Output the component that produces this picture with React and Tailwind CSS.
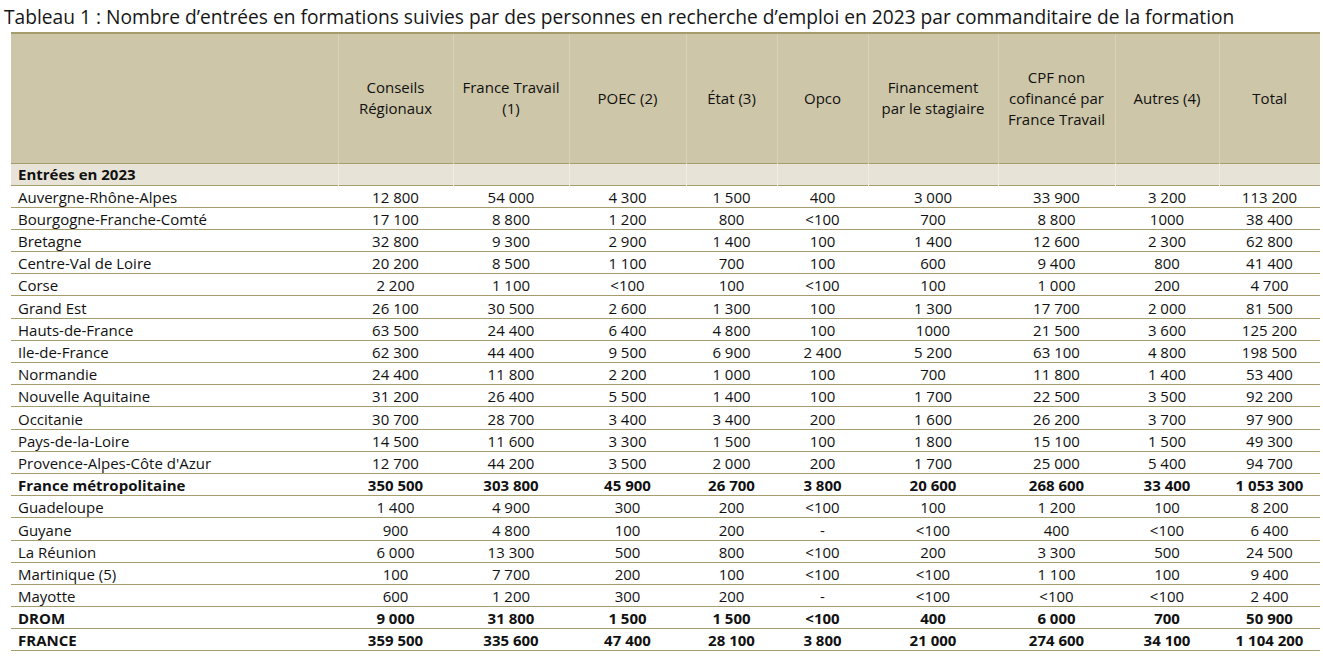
import React from "react";

const cols = [
  { label: ["Conseils", "Régionaux"], w: "w-[115px]" },
  { label: ["France Travail", "(1)"], w: "w-[116px]" },
  { label: ["POEC (2)"], w: "w-[117px]" },
  { label: ["État (3)"], w: "w-[91px]" },
  { label: ["Opco"], w: "w-[91px]" },
  { label: ["Financement", "par le stagiaire"], w: "w-[130px]" },
  { label: ["CPF non", "cofinancé par", "France Travail"], w: "w-[117px]" },
  { label: ["Autres (4)"], w: "w-[104px]" },
  { label: ["Total"], w: "w-[101px]" },
];

const rows = [
  ["Auvergne-Rhône-Alpes", "12 800", "54 000", "4 300", "1 500", "400", "3 000", "33 900", "3 200", "113 200"],
  ["Bourgogne-Franche-Comté", "17 100", "8 800", "1 200", "800", "<100", "700", "8 800", "1000", "38 400"],
  ["Bretagne", "32 800", "9 300", "2 900", "1 400", "100", "1 400", "12 600", "2 300", "62 800"],
  ["Centre-Val de Loire", "20 200", "8 500", "1 100", "700", "100", "600", "9 400", "800", "41 400"],
  ["Corse", "2 200", "1 100", "<100", "100", "<100", "100", "1 000", "200", "4 700"],
  ["Grand Est", "26 100", "30 500", "2 600", "1 300", "100", "1 300", "17 700", "2 000", "81 500"],
  ["Hauts-de-France", "63 500", "24 400", "6 400", "4 800", "100", "1000", "21 500", "3 600", "125 200"],
  ["Ile-de-France", "62 300", "44 400", "9 500", "6 900", "2 400", "5 200", "63 100", "4 800", "198 500"],
  ["Normandie", "24 400", "11 800", "2 200", "1 000", "100", "700", "11 800", "1 400", "53 400"],
  ["Nouvelle Aquitaine", "31 200", "26 400", "5 500", "1 400", "100", "1 700", "22 500", "3 500", "92 200"],
  ["Occitanie", "30 700", "28 700", "3 400", "3 400", "200", "1 600", "26 200", "3 700", "97 900"],
  ["Pays-de-la-Loire", "14 500", "11 600", "3 300", "1 500", "100", "1 800", "15 100", "1 500", "49 300"],
  ["Provence-Alpes-Côte d'Azur", "12 700", "44 200", "3 500", "2 000", "200", "1 700", "25 000", "5 400", "94 700"],
  ["France métropolitaine", "350 500", "303 800", "45 900", "26 700", "3 800", "20 600", "268 600", "33 400", "1 053 300", true],
  ["Guadeloupe", "1 400", "4 900", "300", "200", "<100", "100", "1 200", "100", "8 200"],
  ["Guyane", "900", "4 800", "100", "200", "-", "<100", "400", "<100", "6 400"],
  ["La Réunion", "6 000", "13 300", "500", "800", "<100", "200", "3 300", "500", "24 500"],
  ["Martinique (5)", "100", "7 700", "200", "100", "<100", "<100", "1 100", "100", "9 400"],
  ["Mayotte", "600", "1 200", "300", "200", "-", "<100", "<100", "<100", "2 400"],
  ["DROM", "9 000", "31 800", "1 500", "1 500", "<100", "400", "6 000", "700", "50 900", true],
  ["FRANCE", "359 500", "335 600", "47 400", "28 100", "3 800", "21 000", "274 600", "34 100", "1 104 200", true],
];

export default function App() {
  return (
    <div className="bg-white w-[1323px] h-[656px] overflow-hidden text-[#111] font-['Open_Sans','Liberation_Sans',sans-serif]">
      <h1 className="pl-[4px] pt-[4px] h-[32px] text-[19.2px] leading-[26px] text-[#161616] whitespace-nowrap">
        Tableau 1 : Nombre d’entrées en formations suivies par des personnes en recherche d’emploi en 2023 par commanditaire de la formation
      </h1>
      <table className="ml-[11px] w-[1309px] table-fixed border-collapse text-[15px] leading-[19px]">
        <thead>
          <tr className="bg-[#cdc6a8] border-t-[2px] border-b-[1.5px] border-[#a79c6c] h-[130px]">
            <th className="w-[327px]"></th>
            {cols.map((c, i) => (
              <th key={i} className={`${c.w} font-normal text-center leading-[21px] border-l border-[#d8d2bb]`}>
                {c.label.map((l, j) => (
                  <div key={j}>{l}</div>
                ))}
              </th>
            ))}
          </tr>
        </thead>
        <tbody>
          <tr className="bg-[#e7e3d6] border-b-[1.5px] border-[#a79c6c] h-[22px]">
            <td className="pl-[7px] font-bold align-middle">Entrées en 2023</td>
            {cols.map((c, i) => (
              <td key={i} className="border-l border-[#efece3]"></td>
            ))}
          </tr>
          {rows.map((r, i) => (
            <tr key={i} className={`border-b-[1.5px] border-[#a79c6c] h-[22.2px] ${r[10] ? "font-bold" : ""}`}>
              <td className="pl-[7px] align-bottom whitespace-nowrap">{r[0]}</td>
              {r.slice(1, 10).map((v, j) => (
                <td key={j} className="align-bottom text-center whitespace-nowrap">{v}</td>
              ))}
            </tr>
          ))}
        </tbody>
      </table>
    </div>
  );
}
